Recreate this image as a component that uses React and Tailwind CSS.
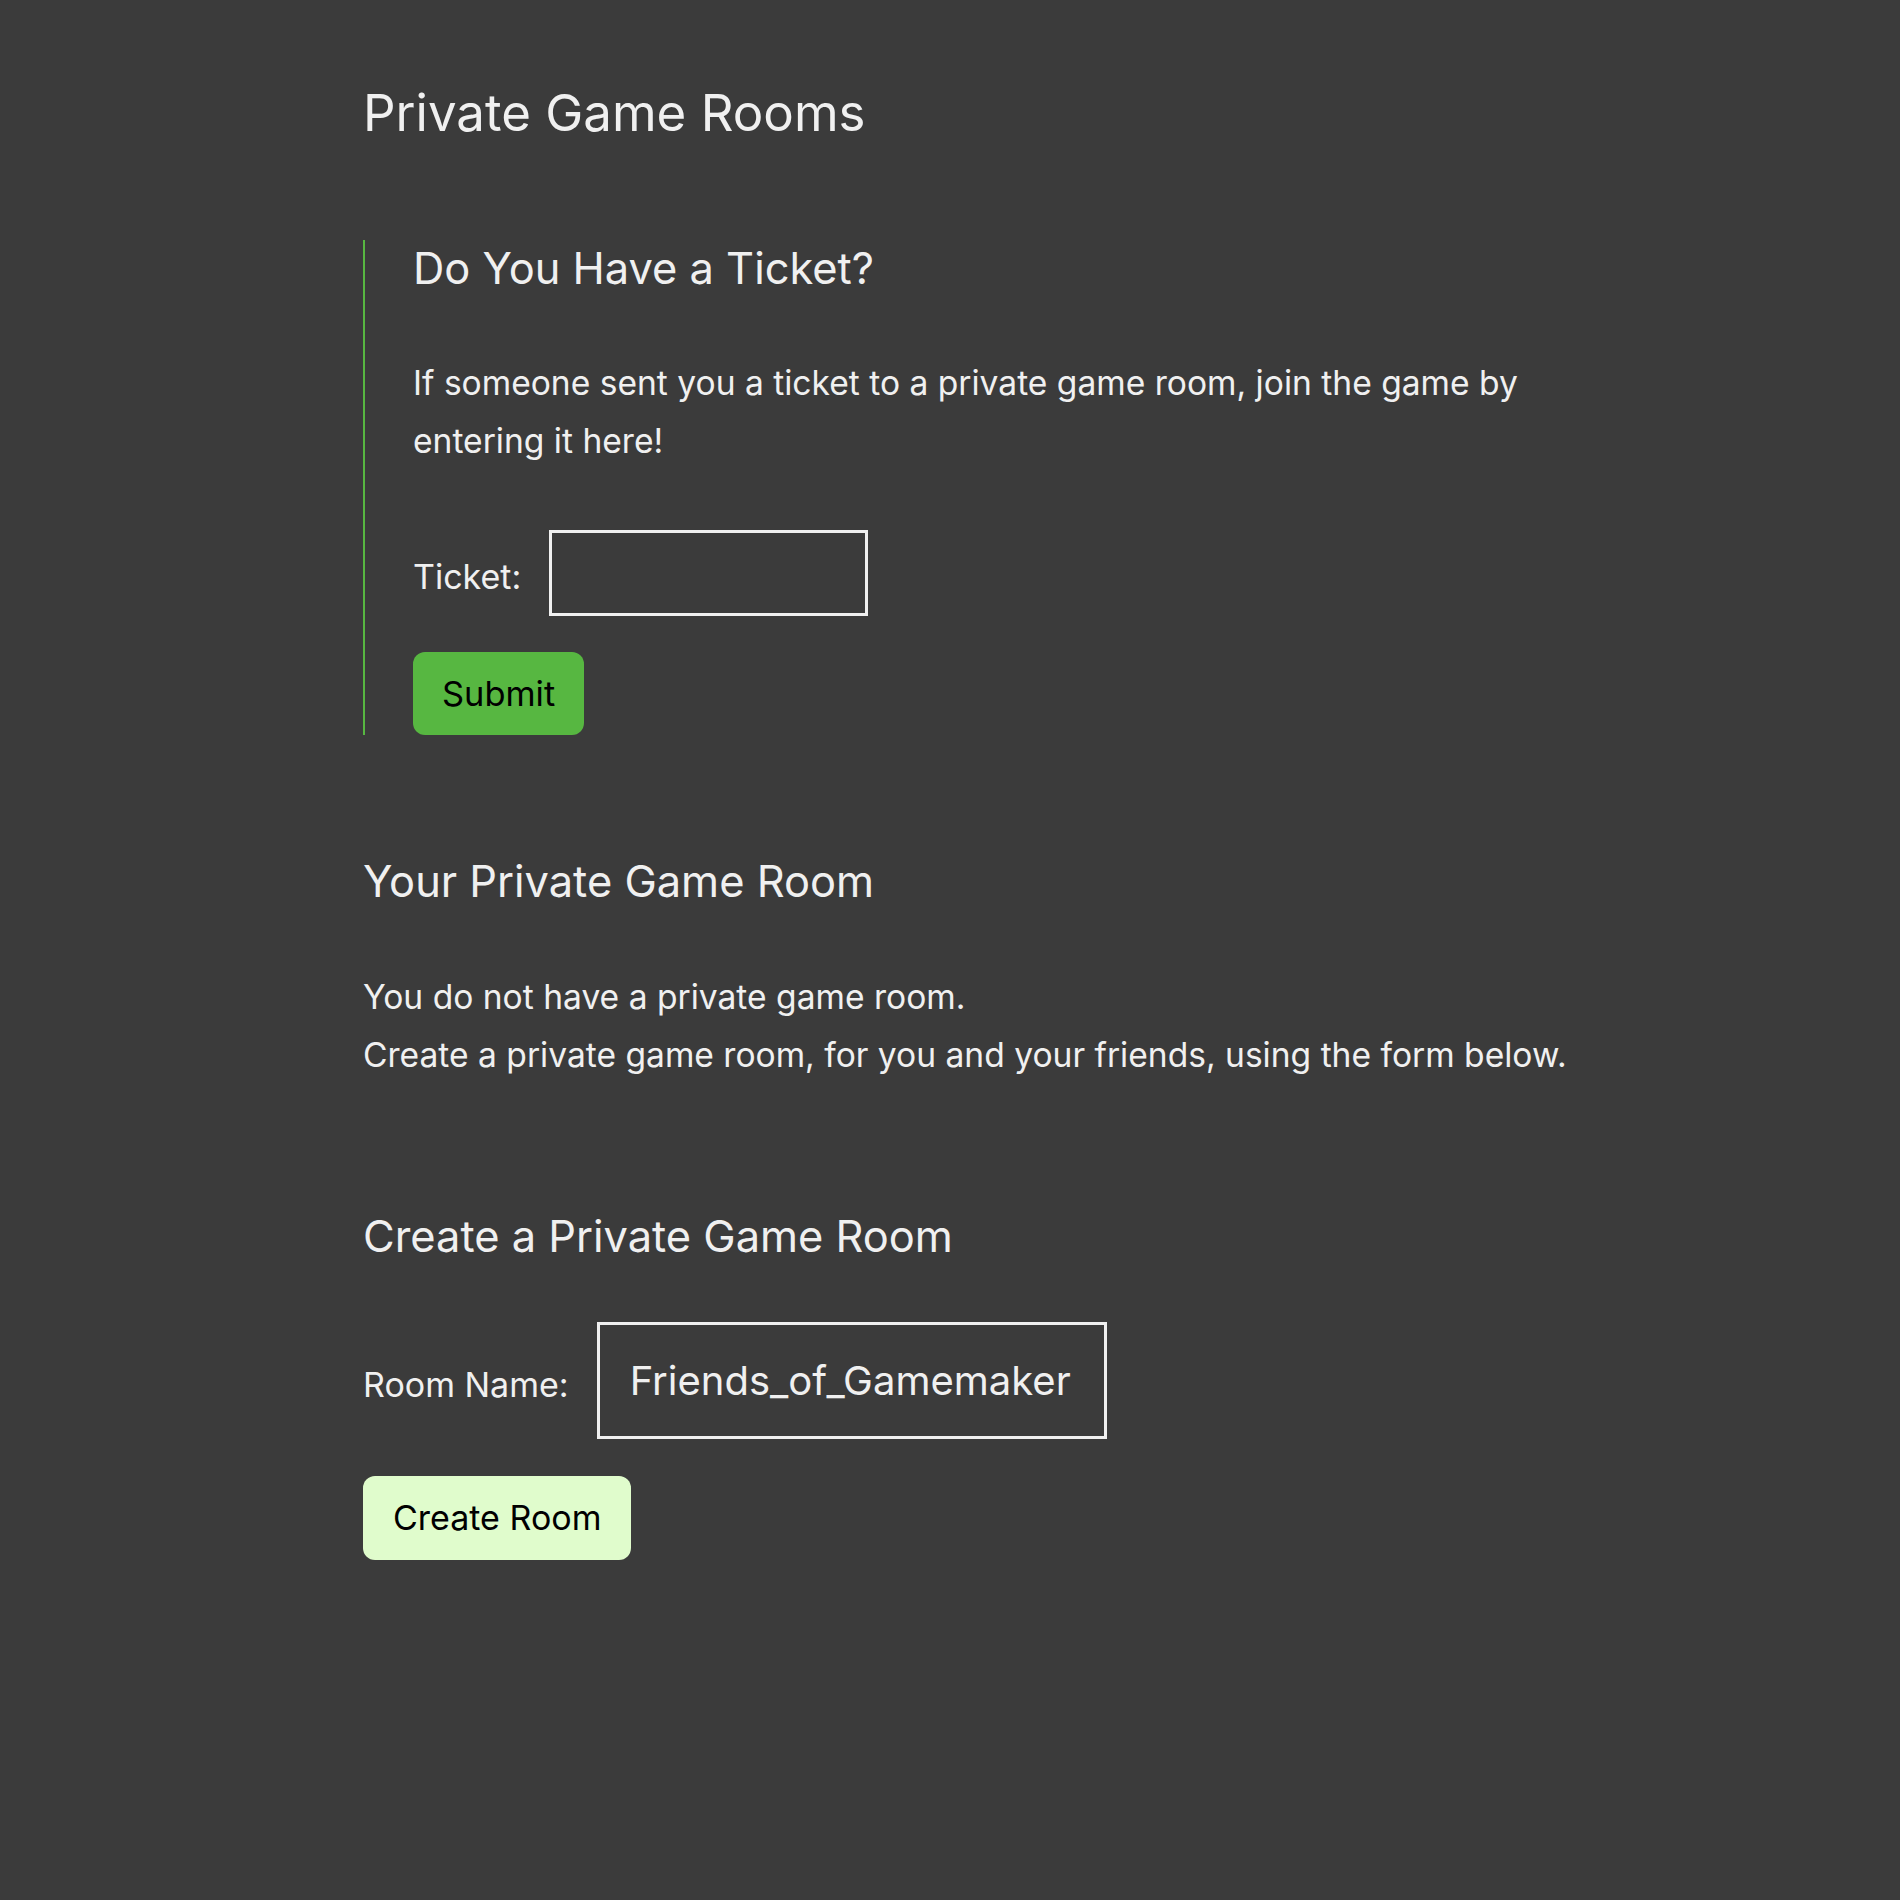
export default function App() {
  return (
    <div
      className="min-h-[1900px] w-full bg-[#3b3b3b] text-[#f0f0f0] pl-[363px] pt-[81px]"
      style={{ fontFamily: "Inter, 'Noto Sans', sans-serif" }}
    >
      <div className="w-[1240px]">
        <h1 className="text-[51px] leading-[64px] font-normal">Private Game Rooms</h1>

        <section className="mt-[95px] border-l-2 border-[#57b741] pl-[48px]">
          <h2 className="text-[43.4px] leading-[56px] font-normal">Do You Have a Ticket?</h2>
          <p className="mt-[58px] text-[33.6px] leading-[58px]">
            If someone sent you a ticket to a private game room, join the game by entering it here!
          </p>
          <div className="mt-[60px] flex items-center gap-[28px]">
            <label className="text-[34px] leading-[40px] pt-[8px]">Ticket:</label>
            <input
              type="text"
              className="w-[319px] h-[86px] border-[3px] border-[#f0f0f0] bg-transparent px-[30px] text-[40px] text-[#f0f0f0] outline-none"
            />
          </div>
          <button className="mt-[36px] h-[83px] px-[29px] rounded-[12px] bg-[#57b741] text-black text-[34.4px] leading-[40px]">
            Submit
          </button>
        </section>

        <h2 className="mt-[118px] text-[43.4px] leading-[56px] font-normal">Your Private Game Room</h2>
        <p className="mt-[59px] text-[33.6px] leading-[58px]">
          You do not have a private game room.
          <br />
          Create a private game room, for you and your friends, using the form below.
        </p>

        <h2 className="mt-[124px] text-[43.4px] leading-[56px] font-normal">Create a Private Game Room</h2>
        <div className="mt-[58px] flex items-center gap-[28px]">
          <label className="text-[34px] leading-[40px] pt-[8px]">Room Name:</label>
          <input
            type="text"
            defaultValue="Friends_of_Gamemaker"
            className="w-[510px] h-[117px] border-[3px] border-[#f0f0f0] bg-transparent px-[30px] text-[40px] text-[#f0f0f0] outline-none"
          />
        </div>
        <button className="mt-[37px] h-[84px] px-[30px] rounded-[12px] bg-[#e0fccc] text-black text-[34px] leading-[40px]">
          Create Room
        </button>
      </div>
    </div>
  );
}
